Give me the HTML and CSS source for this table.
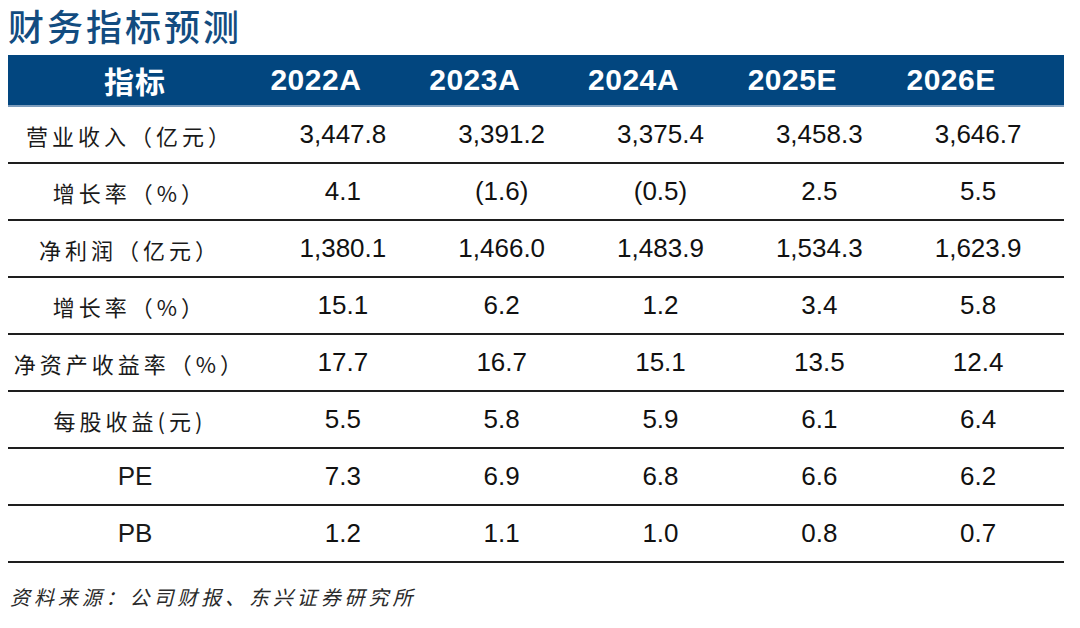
FILE: index.html
```html
<!DOCTYPE html>
<html lang="zh">
<head>
<meta charset="utf-8">
<title>财务指标预测</title>
<link rel="stylesheet" href="styles.css">
</head>
<body>
<div class="page">
  <h1 class="title">财务指标预测</h1>
  <div class="table">
    <div class="row head">
      <div class="cell label">指标</div>
      <div class="cell">2022A</div>
      <div class="cell">2023A</div>
      <div class="cell">2024A</div>
      <div class="cell">2025E</div>
      <div class="cell">2026E</div>
    </div>
    <div class="row">
      <div class="cell label">营业收入（亿元）</div>
      <div class="cell">3,447.8</div>
      <div class="cell">3,391.2</div>
      <div class="cell">3,375.4</div>
      <div class="cell">3,458.3</div>
      <div class="cell">3,646.7</div>
    </div>
    <div class="row">
      <div class="cell label">增长率（%）</div>
      <div class="cell">4.1</div>
      <div class="cell">(1.6)</div>
      <div class="cell">(0.5)</div>
      <div class="cell">2.5</div>
      <div class="cell">5.5</div>
    </div>
    <div class="row">
      <div class="cell label">净利润（亿元）</div>
      <div class="cell">1,380.1</div>
      <div class="cell">1,466.0</div>
      <div class="cell">1,483.9</div>
      <div class="cell">1,534.3</div>
      <div class="cell">1,623.9</div>
    </div>
    <div class="row">
      <div class="cell label">增长率（%）</div>
      <div class="cell">15.1</div>
      <div class="cell">6.2</div>
      <div class="cell">1.2</div>
      <div class="cell">3.4</div>
      <div class="cell">5.8</div>
    </div>
    <div class="row">
      <div class="cell label">净资产收益率（%）</div>
      <div class="cell">17.7</div>
      <div class="cell">16.7</div>
      <div class="cell">15.1</div>
      <div class="cell">13.5</div>
      <div class="cell">12.4</div>
    </div>
    <div class="row">
      <div class="cell label">每股收益(元)</div>
      <div class="cell">5.5</div>
      <div class="cell">5.8</div>
      <div class="cell">5.9</div>
      <div class="cell">6.1</div>
      <div class="cell">6.4</div>
    </div>
    <div class="row">
      <div class="cell label latin">PE</div>
      <div class="cell">7.3</div>
      <div class="cell">6.9</div>
      <div class="cell">6.8</div>
      <div class="cell">6.6</div>
      <div class="cell">6.2</div>
    </div>
    <div class="row">
      <div class="cell label latin">PB</div>
      <div class="cell">1.2</div>
      <div class="cell">1.1</div>
      <div class="cell">1.0</div>
      <div class="cell">0.8</div>
      <div class="cell">0.7</div>
    </div>
  </div>
  <p class="source">资料来源：公司财报、东兴证券研究所</p>
</div>
</body>
</html>
```
FILE: styles.css
```css
html, body {
  margin: 0;
  padding: 0;
  background: #ffffff;
}

.page {
  width: 1080px;
  height: 628px;
  padding: 0 16px 0 8px;
  box-sizing: border-box;
  font-family: "Liberation Sans", "Noto Sans CJK SC", sans-serif;
}

.title {
  margin: 0;
  height: 55px;
  padding-top: 3px;
  box-sizing: border-box;
  font-family: "Noto Sans CJK SC", sans-serif;
  font-weight: 500;
  font-size: 36px;
  line-height: 44px;
  letter-spacing: 3px;
  color: #124c80;
}

.table {
  width: 1056px;
}

.row {
  display: grid;
  grid-template-columns: 262px repeat(5, 1fr);
  align-items: center;
  height: 57px;
  border-bottom: 2px solid #1e1e1e;
  box-sizing: border-box;
}

.row .cell {
  text-align: center;
  padding-right: 13px;
  font-size: 26px;
  color: #111111;
  white-space: nowrap;
}

.row .cell.label {
  padding-right: 18px;
  font-family: "Noto Sans CJK SC", sans-serif;
  font-size: 22px;
  letter-spacing: 4px;
  color: #1a1a1a;
}

.row .cell.label.latin {
  font-family: "Liberation Sans", sans-serif;
  font-size: 26px;
  letter-spacing: 0;
  padding-right: 8px;
}

.row.head {
  height: 52px;
  background: #02467f;
  border-bottom: 2px solid #7d9dbd;
}

.row.head .cell {
  color: #ffffff;
  font-weight: 700;
  font-size: 30px;
  letter-spacing: 0.5px;
  padding-right: 67px;
}

.row.head .cell.label {
  font-family: "Noto Sans CJK SC", sans-serif;
  font-size: 30px;
  letter-spacing: 1px;
  padding-right: 8px;
}

.source {
  margin: 20px 0 0 2px;
  font-family: "Noto Sans CJK SC", sans-serif;
  font-style: italic;
  font-size: 20px;
  line-height: 28px;
  letter-spacing: 3.9px;
  color: #2a2a2a;
}
```
